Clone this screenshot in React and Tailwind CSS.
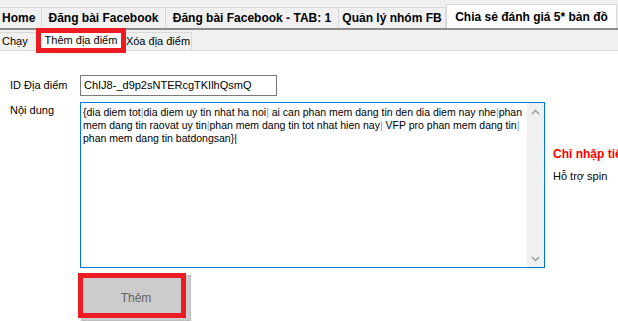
import React from "react";

function Pipe() {
  return <span className="text-[#6f9fd0]">|</span>;
}

export default function App() {
  return (
    <div className="w-[618px] h-[322px] overflow-hidden bg-white flex flex-col font-['Liberation_Sans',Arial,sans-serif] text-[11px] text-black">
      {/* Outer tab strip */}
      <div className="h-[28px] bg-[#f0f0f0] flex items-end shrink-0 text-[12px] font-bold">
        <div className="w-[42px] h-[21px] border-t border-r border-[#d9d9d9] flex items-center pl-[2px]">Home</div>
        <div className="w-[124px] h-[21px] border-t border-r border-[#d9d9d9] flex items-center justify-center">Đăng bài Facebook</div>
        <div className="w-[173px] h-[21px] border-t border-r border-[#d9d9d9] flex items-center justify-center">Đăng bài Facebook - TAB: 1</div>
        <div className="w-[107px] h-[21px] border-t border-r border-[#d9d9d9] flex items-center justify-center">Quản lý nhóm FB</div>
        <div className="w-[171px] h-[24px] bg-white border-t border-l border-r border-[#d9d9d9] flex items-center justify-center">Chia sẻ đánh giá 5* bản đồ</div>
      </div>
      <div className="h-[2px] bg-[#8c8c8c] shrink-0" />

      {/* Inner tab strip */}
      <div className="relative h-[21px] bg-[#f0f0f0] border-b border-[#d9d9d9] flex items-end shrink-0">
        <div className="w-[38px] h-[18px] border-t border-r border-[#d9d9d9] flex items-center pl-[2px]">Chạy</div>
        <div className="w-[86px] h-[21px] -mb-px bg-white flex items-center justify-center">Thêm địa điểm</div>
        <div className="w-[68px] h-[18px] border-t border-r border-l border-[#d9d9d9] flex items-center justify-center">Xóa địa điểm</div>
        <div className="absolute left-[36px] top-[-2px] w-[90px] h-[25px] border-[5px] border-[#ed1c24]" />
      </div>

      {/* Content */}
      <div className="flex-1 bg-white flex flex-col">
        <div className="mt-[24px] flex items-center">
          <div className="w-[80px] pl-[10px] shrink-0">ID Địa điểm</div>
          <div className="w-[197px] h-[21px] border border-[#7a7a7a] pl-[3px] flex items-center">ChIJ8-_d9p2sNTERcgTKIlhQsmQ</div>
        </div>

        <div className="mt-[6px] flex items-start">
          <div className="w-[80px] pl-[10px] pt-[2px] leading-[13px] shrink-0">Nội dung</div>
          <div className="w-[465px] h-[166px] border border-[#0078d7] flex shrink-0">
            <div className="flex-1 pl-[2px] pt-[3px] leading-[13px] text-[10.5px] whitespace-pre">
              {"{dia diem tot"}<Pipe />{"dia diem uy tin nhat ha noi"}<Pipe />{" ai can phan mem dang tin den dia diem nay nhe"}<Pipe />{"phan"}
              <br />
              {"mem dang tin raovat uy tin"}<Pipe />{"phan mem dang tin tot nhat hien nay"}<Pipe />{" VFP pro phan mem dang tin"}<Pipe />
              <br />
              {"phan mem dang tin batdongsan}"}<span>|</span>
            </div>
            <div className="w-[17px] bg-[#f0f0f0] flex flex-col justify-between shrink-0">
              <div className="h-[17px] flex items-center justify-center">
                <svg width="9" height="6" viewBox="0 0 9 6"><path d="M1 5 L4.5 1.5 L8 5" fill="none" stroke="#a3a3a3" strokeWidth="1.6" /></svg>
              </div>
              <div className="h-[17px] flex items-center justify-center">
                <svg width="9" height="6" viewBox="0 0 9 6"><path d="M1 1 L4.5 4.5 L8 1" fill="none" stroke="#a3a3a3" strokeWidth="1.6" /></svg>
              </div>
            </div>
          </div>
          <div className="ml-[8px] pt-[45px] shrink-0 whitespace-nowrap">
            <div className="text-[12px] font-bold text-[#ff0000] leading-[14px]">Chỉ nhập tiêu đề</div>
            <div className="mt-[9px] leading-[13px]">Hỗ trợ spin</div>
          </div>
        </div>

        <div className="mt-[7px] ml-[81px]">
          <div className="relative w-[110px] h-[46px] bg-[#cccccc] border border-[#bdbdbd] flex items-center justify-center text-[12px] text-[#626262]">
            Thêm
            <div className="absolute left-[-4px] top-[-3px] w-[108px] h-[45px] border-[5px] border-[#ed1c24]" />
          </div>
        </div>
      </div>
    </div>
  );
}
